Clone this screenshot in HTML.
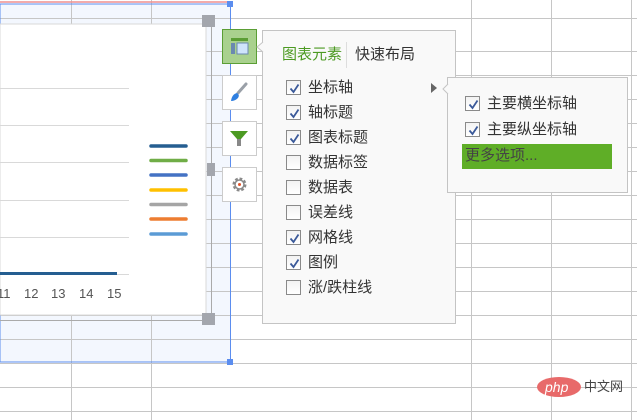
<!DOCTYPE html>
<html><head><meta charset="utf-8"><style>
*{margin:0;padding:0;box-sizing:border-box}
body{width:637px;height:420px;overflow:hidden;background:#fff;position:relative;font-family:"Liberation Sans","Noto Sans CJK SC",sans-serif;font-size:14px;color:#333}
.a{position:absolute}
.cb{position:absolute;width:15px;height:15px;border:1px solid #8a8a8a;background:linear-gradient(#f2f2f2,#fff);}
.cb svg{position:absolute;left:1px;top:1px}
.it{position:absolute;font-size:15px;color:#333;line-height:18px}
</style></head><body>
<svg class="a" style="left:0;top:0" width="637" height="420">
<rect x="0" y="4" width="230" height="358" fill="#f3f7fe"/>
<g stroke="#c6c6c6" stroke-width="1">
<line x1="71.5" y1="0" x2="71.5" y2="420"/><line x1="151.5" y1="0" x2="151.5" y2="420"/>
<line x1="471.5" y1="0" x2="471.5" y2="420"/><line x1="551.5" y1="0" x2="551.5" y2="420"/><line x1="631.5" y1="0" x2="631.5" y2="420"/>
<line x1="0" y1="18.5" x2="637" y2="18.5"/>
<line x1="0" y1="51.5" x2="637" y2="51.5"/><line x1="0" y1="75.5" x2="637" y2="75.5"/><line x1="0" y1="99.5" x2="637" y2="99.5"/><line x1="0" y1="123.5" x2="637" y2="123.5"/><line x1="0" y1="147.5" x2="637" y2="147.5"/><line x1="0" y1="171.5" x2="637" y2="171.5"/><line x1="0" y1="195.5" x2="637" y2="195.5"/><line x1="0" y1="219.5" x2="637" y2="219.5"/><line x1="0" y1="243.5" x2="637" y2="243.5"/><line x1="0" y1="267.5" x2="637" y2="267.5"/><line x1="0" y1="291.5" x2="637" y2="291.5"/><line x1="0" y1="315.5" x2="637" y2="315.5"/><line x1="0" y1="339.5" x2="637" y2="339.5"/><line x1="0" y1="363.5" x2="637" y2="363.5"/><line x1="0" y1="387.5" x2="637" y2="387.5"/><line x1="0" y1="411.5" x2="637" y2="411.5"/>
</g>
<line x1="0" y1="2" x2="230" y2="2" stroke="#ef8f8f" stroke-width="1.5"/>
<rect x="0" y="4" width="230.5" height="358" fill="none" stroke="#5b8def" stroke-width="1"/>
<rect x="227" y="1" width="6" height="6" fill="#5b8def"/><rect x="227" y="359" width="6" height="6" fill="#5b8def"/>
<line x1="211.5" y1="22" x2="211.5" y2="316" stroke="#aaa"/>
<line x1="0" y1="320.5" x2="211" y2="320.5" stroke="#aaa"/>
<rect x="0" y="24" width="206" height="291" fill="#fff" stroke="#d8d8d8"/>
<rect x="202" y="15" width="13" height="12" fill="#a3a6ad"/><rect x="207" y="163" width="8" height="13" fill="#a3a6ad"/><rect x="202" y="313" width="13" height="12" fill="#a3a6ad"/>
<g stroke="#d9d9d9"><line x1="0" y1="88.5" x2="129" y2="88.5"/><line x1="0" y1="125.5" x2="129" y2="125.5"/><line x1="0" y1="162.5" x2="129" y2="162.5"/><line x1="0" y1="200.5" x2="129" y2="200.5"/><line x1="0" y1="237.5" x2="129" y2="237.5"/><line x1="0" y1="274.5" x2="129" y2="274.5"/></g>
<line x1="0" y1="273.5" x2="117" y2="273.5" stroke="#255e91" stroke-width="3"/>
<g stroke-width="3.5" stroke-linecap="round"><line x1="151" y1="146" x2="186" y2="146" stroke="#255e91"/><line x1="151" y1="160.5" x2="186" y2="160.5" stroke="#70ad47"/><line x1="151" y1="175" x2="186" y2="175" stroke="#4472c4"/><line x1="151" y1="190" x2="186" y2="190" stroke="#ffc000"/><line x1="151" y1="204.5" x2="186" y2="204.5" stroke="#a5a5a5"/><line x1="151" y1="219" x2="186" y2="219" stroke="#ed7d31"/><line x1="151" y1="234" x2="186" y2="234" stroke="#5b9bd5"/></g>
<g font-size="13" fill="#555" font-family="Liberation Sans,sans-serif"><text x="-3" y="298">11</text><text x="24" y="298">12</text><text x="51" y="298">13</text><text x="79" y="298">14</text><text x="107" y="298">15</text></g>
<rect x="222.5" y="29.5" width="34" height="34" fill="#a9d18e" stroke="#5b9e35"/>
<rect x="231" y="38" width="17" height="3" fill="#5b9e35"/><rect x="231" y="43" width="4" height="11" fill="#6a89b0"/><rect x="237" y="43" width="11" height="11" fill="#cfe4fb" stroke="#6a89b0"/>
<rect x="222.5" y="75.5" width="34" height="34" fill="#fff" stroke="#ccc"/>
<path d="M246 84 L238 93" stroke="#9aa0a8" stroke-width="3" stroke-linecap="round"/><path d="M231 101 Q232 94 237 93 Q240 95 238 98 Q235 101 231 101Z" fill="#2f7fe0"/>
<rect x="222.5" y="121.5" width="34" height="34" fill="#fff" stroke="#ccc"/>
<path d="M230 131 H248 L241 139 V146 H237 V139Z" fill="#4c9a22"/><rect x="237" y="139" width="4" height="7" fill="#888"/>
<rect x="222.5" y="167.5" width="34" height="34" fill="#fff" stroke="#ccc"/>
<circle cx="239.5" cy="184.5" r="5.5" fill="none" stroke="#8a8a8a" stroke-width="3" stroke-dasharray="2.6 1.7"/><circle cx="239.5" cy="184.5" r="4.5" fill="none" stroke="#8a8a8a" stroke-width="1.5"/><circle cx="239.5" cy="184.5" r="1.5" fill="#e2542a"/>
<rect x="262.5" y="30.5" width="193" height="293" fill="#f9f9f9" stroke="#c4c4c4"/>
<path d="M263 42 L257 47 L263 52" fill="#f9f9f9" stroke="#c4c4c4"/>
<line x1="346.5" y1="42" x2="346.5" y2="68" stroke="#ddd"/>
<path d="M431 83 L437 88 L431 93Z" fill="#666"/>
<rect x="447.5" y="77.5" width="180" height="115" fill="#f9f9f9" stroke="#c4c4c4"/>
<path d="M448 84 L443 89 L448 94" fill="#f9f9f9" stroke="#c4c4c4"/>
<rect x="462" y="144" width="150" height="25" fill="#5fae27"/>
<ellipse cx="559" cy="387" rx="22" ry="10" fill="#e86a6a"/>
<text x="545" y="392" font-size="14" font-style="italic" fill="#fff" font-family="Liberation Sans,sans-serif">php</text>
</svg>
<div class="it" style="left:282px;top:46px;color:#4c9a22">图表元素</div>
<div class="it" style="left:355px;top:46px">快速布局</div>
<div id="items"></div>
<div class="it" style="left:465px;top:147px;color:#444">更多选项...</div>
<div class="it" style="left:584px;top:378px;color:#444;font-size:13px">中文网</div>
<script>
var c='<svg width="13" height="13"><path d="M2.5 6.5 L5.5 10 L10.5 2.5" fill="none" stroke="#3b5a9a" stroke-width="1.8"/></svg>';
var L=[["坐标轴",1],["轴标题",1],["图表标题",1],["数据标签",0],["数据表",0],["误差线",0],["网格线",1],["图例",1],["涨/跌柱线",0]],h='';
L.forEach(function(x,i){var y=80+i*25;h+='<div class="cb" style="left:286px;top:'+y+'px">'+(x[1]?c:'')+'</div><div class="it" style="left:308px;top:'+(y-1)+'px">'+x[0]+'</div>';});
[["主要横坐标轴",96],["主要纵坐标轴",122]].forEach(function(x){h+='<div class="cb" style="left:465px;top:'+x[1]+'px">'+c+'</div><div class="it" style="left:487px;top:'+(x[1]-1)+'px">'+x[0]+'</div>';});
document.getElementById('items').innerHTML=h;
</script>
</body></html>
